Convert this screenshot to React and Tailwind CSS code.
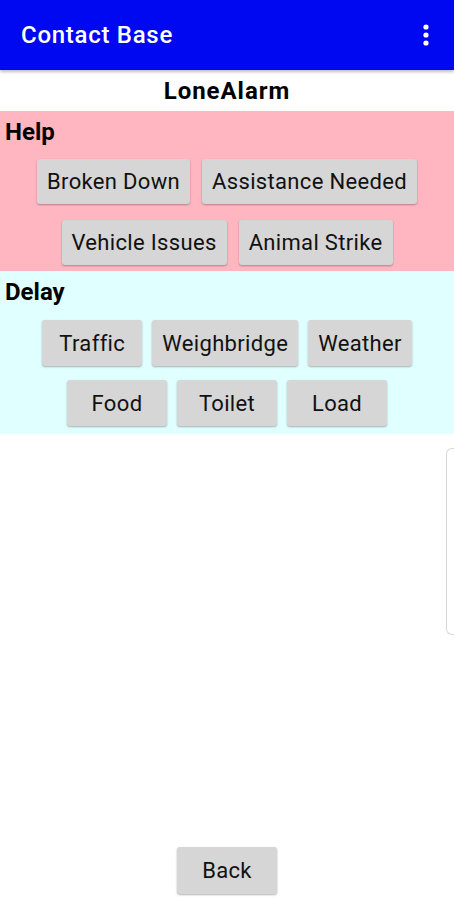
const help = [['Broken Down', 'Assistance Needed'], ['Vehicle Issues', 'Animal Strike']];
const delay = [['Traffic', 'Weighbridge', 'Weather'], ['Food', 'Toilet', 'Load']];

function Btn({ label, h }) {
  return (
    <button className={`${h} min-w-[100px] rounded-[3px] bg-[#d6d6d6] px-[10px] text-[22px] tracking-[0.015em] text-[#111] shadow-[0_1px_2px_rgba(0,0,0,0.3)]`}>
      {label}
    </button>
  );
}

function Section({ title, rows, bg, rowGap, colGap, pb, pt, h }) {
  return (
    <div className={`${bg} ${pb}`}>
      <div className="h-[43px] pl-[5px] pt-[6px] text-[24px] font-bold leading-[30px] text-black">{title}</div>
      <div className={`flex flex-col ${rowGap} ${pt}`}>
        {rows.map((row, i) => (
          <div key={i} className={`flex justify-center ${colGap}`}>
            {row.map((b) => (
              <Btn key={b} label={b} h={h} />
            ))}
          </div>
        ))}
      </div>
    </div>
  );
}

export default function App() {
  return (
    <div className="relative flex h-[900px] flex-col bg-white font-['Roboto',sans-serif]">
      <div className="flex h-[70px] shrink-0 items-center justify-between bg-[#0008f2] pl-[21px] pr-[25px] shadow-[0_2px_3px_rgba(0,0,0,0.25)]">
        <span className="text-[24px] font-medium tracking-[0.03em] text-white">Contact Base</span>
        <svg width="6" height="22" viewBox="0 0 6 22" fill="white">
          <circle cx="3" cy="3" r="2.6" />
          <circle cx="3" cy="11" r="2.6" />
          <circle cx="3" cy="19" r="2.6" />
        </svg>
      </div>
      <div className="flex h-[41px] items-center justify-center text-[24px] font-bold tracking-[0.04em] text-black">LoneAlarm</div>
      <Section title="Help" rows={help} bg="bg-[#ffb6c1]" rowGap="gap-[16px]" colGap="gap-[12px]" pb="pb-[6px]" pt="pt-[5px]" h="h-[45px]" />
      <Section title="Delay" rows={delay} bg="bg-[#e0ffff]" rowGap="gap-[14px]" colGap="gap-[10px]" pb="pb-[8px]" pt="pt-[6px]" h="h-[46px]" />
      <div className="flex-1" />
      <div className="flex justify-center pb-[6px]">
        <button className="h-[47px] w-[100px] rounded-[3px] bg-[#d6d6d6] text-[22px] tracking-[0.015em] text-[#111] shadow-[0_1px_2px_rgba(0,0,0,0.3)]">
          Back
        </button>
      </div>
      <div className="absolute right-0 top-[448px] h-[187px] w-[8px] rounded-l-[6px] border-y border-l border-[#d8d8d8]" />
    </div>
  );
}
